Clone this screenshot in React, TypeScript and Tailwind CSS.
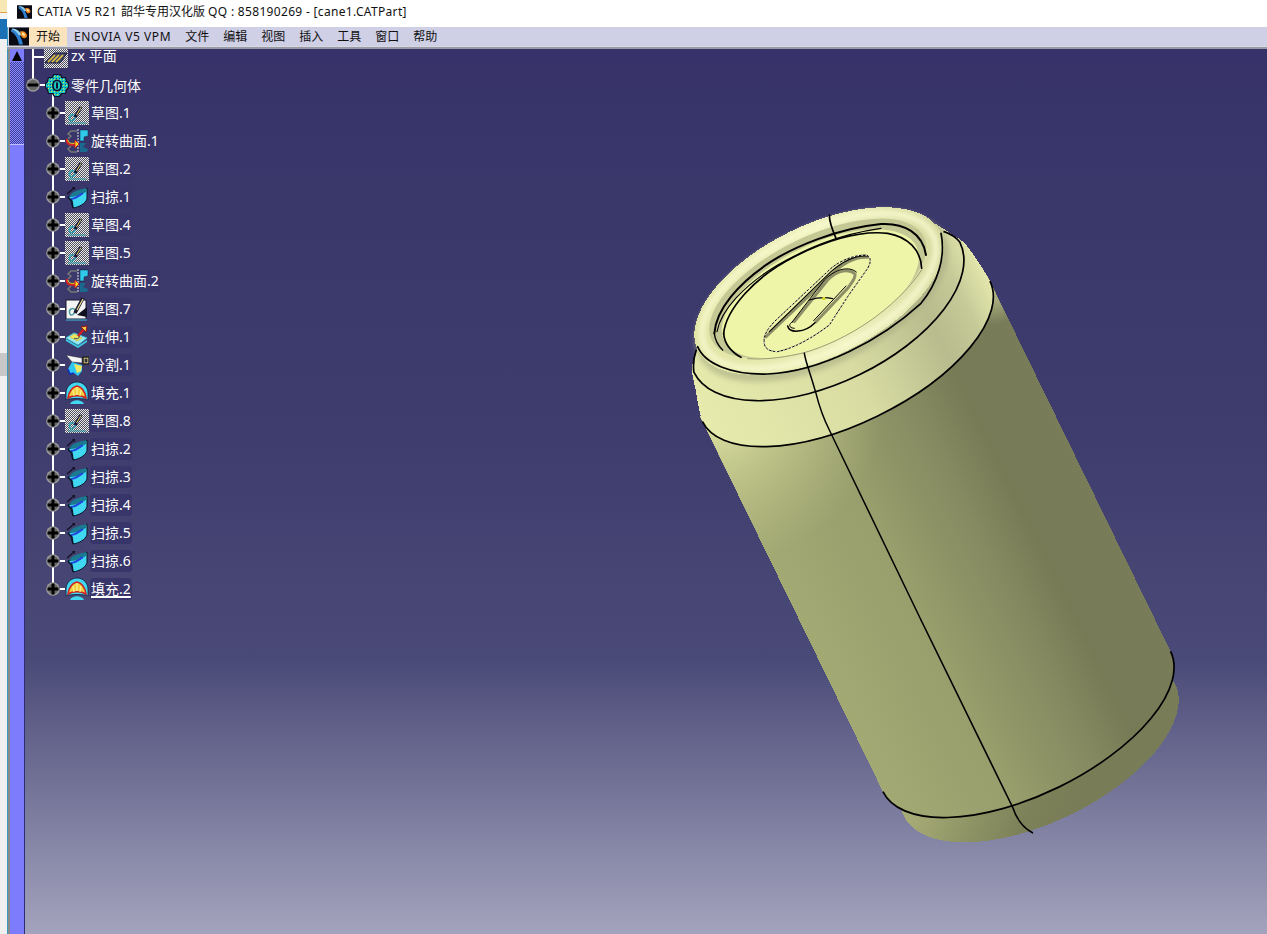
import React from "react";

const MENU = ["ENOVIA V5 VPM", "文件", "编辑", "视图", "插入", "工具", "窗口", "帮助"];

type Kind = "sketch" | "sketchOn" | "revolve" | "sweep" | "extrude" | "split" | "fill";

const ROWS: { label: string; kind: Kind }[] = [
  { label: "草图.1", kind: "sketch" },
  { label: "旋转曲面.1", kind: "revolve" },
  { label: "草图.2", kind: "sketch" },
  { label: "扫掠.1", kind: "sweep" },
  { label: "草图.4", kind: "sketch" },
  { label: "草图.5", kind: "sketch" },
  { label: "旋转曲面.2", kind: "revolve" },
  { label: "草图.7", kind: "sketchOn" },
  { label: "拉伸.1", kind: "extrude" },
  { label: "分割.1", kind: "split" },
  { label: "填充.1", kind: "fill" },
  { label: "草图.8", kind: "sketch" },
  { label: "扫掠.2", kind: "sweep" },
  { label: "扫掠.3", kind: "sweep" },
  { label: "扫掠.4", kind: "sweep" },
  { label: "扫掠.5", kind: "sweep" },
  { label: "扫掠.6", kind: "sweep" },
  { label: "填充.2", kind: "fill" },
];

function CatiaLogo({ className }: { className: string }) {
  return (
    <svg viewBox="0 0 20 18" className={className}>
      <rect width="20" height="18" fill="#0a0a12" />
      <path d="M2 2 C8 3 12 8 14 17 L10 17 C9 11 6 6 2 4 Z" fill="#2f7fd0" />
      <path d="M3 1 C8 1 11 4 13 8 L10 8 C8 5 6 3 3 2 Z" fill="#8fd0f0" />
      <path d="M11 4 C15 3 18 5 18 9 C16 12 13 11 12 8 Z" fill="#f08a20" />
      <path d="M13 5 C15 5 16 6 16 8 C15 9 14 8 13 7 Z" fill="#ffe9a0" />
    </svg>
  );
}

function Node({ minus }: { minus?: boolean }) {
  return (
    <svg viewBox="0 0 14 14" className="relative w-[14px] h-[14px] shrink-0">
      <circle cx="7" cy="7" r="6.8" fill="#9a9a9a" />
      <circle cx="7" cy="7" r="5.2" fill="#666" />
      <rect x="1.5" y="5.5" width="11" height="3" fill="#000" />
      {!minus && <rect x="5.5" y="1.5" width="3" height="11" fill="#000" />}
    </svg>
  );
}

function Dither({ id }: { id: string }) {
  return (
    <pattern id={id} width="2" height="2" patternUnits="userSpaceOnUse">
      <rect width="2" height="2" fill="#50505e" />
      <rect width="1" height="1" fill="#f0f0f0" />
      <rect x="1" y="1" width="1" height="1" fill="#e4e4e4" />
    </pattern>
  );
}

function TreeIcon({ kind, id }: { kind: Kind; id: string }) {
  if (kind === "sketch") {
    return (
      <svg viewBox="0 0 24 24" className="w-6 h-6 shrink-0">
        <defs>
          <Dither id={id} />
        </defs>
        <rect width="24" height="24" fill={`url(#${id})`} shapeRendering="crispEdges" />
        <path d="M5 19 C3 14 8 12 10 15 C11 18 7 21 5 19 Z" fill="none" stroke="#2aa0b0" strokeWidth="1.5" />
        <path d="M10 16 L16 6" stroke="#14143a" strokeWidth="3" />
        <path d="M11.5 14 L16 6.5" stroke="#f0e060" strokeWidth="1" />
        <path d="M3 22 L21 22" stroke="#2aa0b0" strokeWidth="1" />
      </svg>
    );
  }
  if (kind === "sketchOn") {
    return (
      <svg viewBox="0 0 24 24" className="w-6 h-6 shrink-0">
        <rect x="1" y="3" width="20" height="19" fill="#f4f4f4" stroke="#1a1a30" />
        <path d="M5 17 C3 12 8 10 10 13 C11 16 6 20 5 17 Z" fill="none" stroke="#4a9aa0" strokeWidth="1.5" />
        <path d="M10 16 L18 1" stroke="#1a1a30" strokeWidth="3.5" />
        <path d="M12 13 L18 2" stroke="#f0e090" strokeWidth="1.2" />
        <path d="M12 18 L22 10 L22 20 Z" fill="#101020" />
        <path d="M1 23 L22 23" stroke="#40c0e0" strokeWidth="1" />
      </svg>
    );
  }
  if (kind === "revolve") {
    return (
      <svg viewBox="0 0 24 24" className="w-6 h-6 shrink-0">
        <path d="M12 2 L6 2 L3 5 L6 7 L3 10 M6 17 L3 20 L6 23 L12 23" fill="none" stroke="#777" strokeWidth="1.5" />
        <path d="M15 1 L23 1 L23 7 L19 8 L19 12 L15 12 Z" fill="#30c8e8" stroke="#0a2040" strokeWidth="0.5" />
        <path d="M15 14 L21 14 L18 18 L23 20 L22 23 L15 23 Z" fill="#1a6a90" />
        <path d="M13 0 L13 24" stroke="#e8e8e8" strokeWidth="1" strokeDasharray="2 1" />
        <path d="M2 10 C1 15 5 17 11 15" fill="none" stroke="#e02020" strokeWidth="2" />
        <path d="M3 11 C3 14 6 15 11 14" fill="none" stroke="#f0e020" strokeWidth="1" />
        <path d="M10 11 L14 15 L10 19 Z" fill="#f0e020" stroke="#d02020" strokeWidth="1" />
      </svg>
    );
  }
  if (kind === "sweep") {
    return (
      <svg viewBox="0 0 24 24" className="w-6 h-6 shrink-0">
        <path d="M2 9 L9 3" stroke="#101020" strokeWidth="1.2" />
        <path d="M7 2 L10 2 L10 5 Z" fill="#101020" />
        <path d="M3 12 C8 11 14 7 22 3 L22 14 C20 19 14 22 8 23 L6 16 Z" fill="#40d8f0" stroke="#08142a" strokeWidth="1" />
        <path d="M7 8 C10 6 16 4 21 3 L21 7 C15 10 10 12 4 12 Z" fill="#1a7a90" />
        <path d="M6 14 C10 14 14 11 18 8" fill="none" stroke="#2040e0" strokeWidth="2" />
        <path d="M3 12 L7 16 L8 23" fill="none" stroke="#08142a" strokeWidth="1.5" />
      </svg>
    );
  }
  if (kind === "extrude") {
    return (
      <svg viewBox="0 0 24 24" className="w-6 h-6 shrink-0">
        <path d="M1 13 L9 8 L22 13 L13 20 Z" fill="#9ce8f0" stroke="#40c0d8" strokeWidth="1" />
        <path d="M1 16 L13 23 L22 17 L22 15 L13 21 L1 14 Z" fill="#40d0e8" />
        <path d="M5 12 L9 9 L17 13 L12 16 Z" fill="#f0e860" stroke="#d0c030" strokeWidth="0.7" />
        <path d="M9 13 C12 15 15 13 14 11" fill="none" stroke="#1a3a60" strokeWidth="1" />
        <path d="M13 11 L19 4" stroke="#d02020" strokeWidth="2.5" />
        <path d="M16 2 L22 1 L21 7 Z" fill="#f0d040" stroke="#a01010" strokeWidth="1" />
      </svg>
    );
  }
  if (kind === "split") {
    return (
      <svg viewBox="0 0 24 24" className="w-6 h-6 shrink-0">
        <path d="M1 2 L17 5 L17 10 L7 9 Z" fill="#f4f4f4" stroke="#1a1a30" strokeWidth="0.5" />
        <path d="M18 4 L24 4 L24 11 L18 11 Z" fill="#f0e080" stroke="#202020" strokeWidth="1.5" />
        <rect x="19.5" y="5.5" width="3" height="4" fill="#303040" />
        <path d="M7 9 L17 12 L17 18 L13 23 L9 20 L5 21 L3 16 Z" fill="#30c8f0" />
        <path d="M9 11 L17 13 L16 18 L12 20 Z" fill="#f0e860" />
        <path d="M3 16 L5 21 L9 20" fill="none" stroke="#1030c0" strokeWidth="1.5" />
      </svg>
    );
  }
  return (
    <svg viewBox="0 0 24 24" className="w-6 h-6 shrink-0">
      <path d="M12 1 C18 1 23 6 23 12 L23 19 C20 17 4 17 1 19 L1 12 C1 6 6 1 12 1 Z" fill="#40d8f0" stroke="#0c2040" strokeWidth="0.8" />
      <path d="M3 17 C4 10 8 6 12 5 C16 6 20 10 21 17 C16 14 8 14 3 17 Z" fill="#f4d040" stroke="#d02020" strokeWidth="1.6" />
      <path d="M12 6 L12 14 M8 9 L9 15 M16 9 L15 15" stroke="#f8f090" strokeWidth="1.3" />
      <path d="M5 23 C7 18 17 18 19 23 Z" fill="#40d8f0" />
    </svg>
  );
}

function PlaneIcon() {
  return (
    <svg viewBox="0 0 24 24" className="w-6 h-6 shrink-0">
      <defs>
        <Dither id="plane-d" />
      </defs>
      <rect width="24" height="22" y="1" fill="url(#plane-d)" shapeRendering="crispEdges" />
      <path d="M1 18 L10 8 L23 8 L16 18 Z" fill="#4a4a64" stroke="#14143a" strokeWidth="1" />
      <path d="M4 17 L11 10 M8 17 L15 10 M12 17 L19 10" stroke="#e8c840" strokeWidth="1.5" />
    </svg>
  );
}

function GearIcon() {
  return (
    <svg viewBox="0 0 24 24" className="w-6 h-6 shrink-0">
      <defs>
        <pattern id="gear-d" width="3" height="3" patternUnits="userSpaceOnUse">
          <rect width="3" height="3" fill="#18c8c0" />
          <rect width="1" height="1" fill="#e8e040" />
          <rect x="2" y="2" width="1" height="1" fill="#1050a0" />
        </pattern>
      </defs>
      <path d="M8 1 L16 1 L17 4 L21 4 L22 8 L24 10 L24 15 L22 17 L21 21 L17 21 L15 24 L9 24 L7 21 L3 21 L2 17 L0 15 L0 10 L2 8 L3 4 L7 4 Z" fill="#101030" />
      <path d="M9 2 L15 2 L16 5 L20 5 L21 9 L23 11 L23 14 L21 16 L20 20 L16 20 L14 23 L10 23 L8 20 L4 20 L3 16 L1 14 L1 11 L3 9 L4 5 L8 5 Z" fill="url(#gear-d)" />
      <ellipse cx="12" cy="12.5" rx="5" ry="6" fill="#101030" />
      <ellipse cx="12" cy="12.5" rx="3.2" ry="4.2" fill="#18c8c0" />
      <rect x="11" y="9.5" width="2" height="6" fill="#101030" />
    </svg>
  );
}

function Label({ text, active }: { text: string; active?: boolean }) {
  return (
    <span
      className={`h-[22px] px-px ml-px rounded-sm bg-[#38356a] text-white text-[14px] leading-[22px] whitespace-nowrap ${
        active ? "underline decoration-2 underline-offset-2" : ""
      }`}
    >
      {text}
    </span>
  );
}

function CanModel() {
  return (
    <svg viewBox="0 0 1267 934" className="absolute left-[-24px] top-[-49px] w-[1267px] h-[934px] pointer-events-none">
      <defs>
        <linearGradient id="body" gradientUnits="userSpaceOnUse" x1="-162" y1="0" x2="158" y2="0">
          <stop offset="0" stopColor="#a3a973" />
          <stop offset="0.35" stopColor="#989e6c" />
          <stop offset="0.62" stopColor="#858a61" />
          <stop offset="0.78" stopColor="#767b56" />
          <stop offset="1" stopColor="#787c58" />
        </linearGradient>
        <linearGradient id="cap" gradientUnits="userSpaceOnUse" x1="-100" y1="470" x2="0" y2="585">
          <stop offset="0" stopColor="#a6ab76" />
          <stop offset="0.7" stopColor="#7c8159" />
          <stop offset="1" stopColor="#787d57" />
        </linearGradient>
        <radialGradient id="glow" gradientUnits="userSpaceOnUse" cx="-140" cy="50" r="170">
          <stop offset="0" stopColor="#eef2b0" stopOpacity="1" />
          <stop offset="0.4" stopColor="#dfe3a4" stopOpacity="0.55" />
          <stop offset="1" stopColor="#c8cc90" stopOpacity="0" />
        </radialGradient>
        <radialGradient id="glowR" gradientUnits="userSpaceOnUse" cx="160" cy="60" r="50">
          <stop offset="0" stopColor="#e6eaac" stopOpacity="0.9" />
          <stop offset="1" stopColor="#e6eaac" stopOpacity="0" />
        </radialGradient>
        <linearGradient id="shoulder" gradientUnits="userSpaceOnUse" x1="-162" y1="0" x2="158" y2="0">
          <stop offset="0" stopColor="#e6ebad" />
          <stop offset="0.5" stopColor="#d8dca2" />
          <stop offset="0.78" stopColor="#b8bc8e" />
          <stop offset="0.9" stopColor="#c6ca98" />
          <stop offset="1" stopColor="#e4e8ac" />
        </linearGradient>
        <linearGradient id="rim" gradientUnits="userSpaceOnUse" x1="-135" y1="-30" x2="135" y2="30">
          <stop offset="0" stopColor="#dfe3a2" />
          <stop offset="0.55" stopColor="#eef1bc" />
          <stop offset="1" stopColor="#d4d89e" />
        </linearGradient>
        <filter id="soft" x="-10%" y="-20%" width="120%" height="140%">
          <feGaussianBlur stdDeviation="2.5" />
        </filter>
        <clipPath id="bodyClip">
          <path d="M-162,60 L-162,478 A160,73 0 0 0 158,478 L158,60 Z" />
        </clipPath>
      </defs>

      <g transform="translate(818 291) rotate(-26)">
        <ellipse cx="-3" cy="509" rx="151" ry="72" fill="url(#cap)" shapeRendering="crispEdges" />
        <path d="M-162,60 L-162,478 A160,73 0 0 0 158,478 L158,60 Z" fill="url(#body)" shapeRendering="crispEdges" />
        <g clipPath="url(#bodyClip)">
          <rect x="-170" y="40" width="340" height="240" fill="url(#glow)" />
          <rect x="90" y="40" width="80" height="120" fill="url(#glowR)" />
        </g>
        <path
          d="M-134,-2 C-142,6 -150,12 -151,22 C-155,40 -161,55 -162,66 A160,72 0 0 0 158,66 C157,48 155,35 152,21 C148,12 142,4 134,-10 Z"
          fill="url(#shoulder)"
          shapeRendering="crispEdges"
        />
        <ellipse cx="0" cy="6" rx="137" ry="68" fill="#a8ac82" opacity="0.6" filter="url(#soft)" />
        <ellipse cx="0" cy="0" rx="135" ry="66" fill="url(#rim)" shapeRendering="crispEdges" />
        <ellipse cx="0" cy="0" rx="127" ry="60" fill="none" stroke="#f8fad0" strokeWidth="6" opacity="0.9" filter="url(#soft)" />
        <ellipse cx="0" cy="-3" rx="118" ry="52" fill="#c4c894" />
        <ellipse cx="0" cy="3" rx="107" ry="49" fill="#eef5a9" />
        <g fill="none" stroke="#000" strokeWidth="1.7">
          <path d="M-136,-1 C-142,5 -146,12 -148,18 A148,75 0 0 0 148,18 C147,12 143,6 138,1" />
          <path d="M-162,66 A160,72 0 0 0 158,66" />
          <path d="M-162,478 A160,73 0 0 0 158,478" />
        </g>
      </g>

      {/* details traced at 3x, from the crop at 680,200 */}
      <g transform="translate(680 200) scale(0.33333)" fill="none" stroke="#000" strokeLinecap="round">
        <path d="M50,440 C70,490 150,525 260,522 C420,515 600,420 720,310 C770,250 795,170 780,100" strokeWidth="5" />
        <path d="M100,400 C105,330 170,250 270,185 C340,140 470,85 600,72 C670,68 725,100 735,165" strokeWidth="6" />
        <path d="M108,395 C120,330 190,255 290,195 C370,150 460,105 600,85" strokeWidth="3.5" />
        <path d="M128,400 C135,330 220,230 340,170 C430,125 530,90 620,100 C680,110 720,150 722,205" strokeWidth="5" />
        <path d="M128,400 C130,430 150,455 180,472" strokeWidth="5" />
        <path d="M100,400 C102,420 110,435 125,450" strokeWidth="4" />
        <path d="M370,458 C500,420 640,330 722,210" stroke="#8a8a66" strokeWidth="2.5" />
        <path d="M200,476 C260,480 320,470 370,458" stroke="#8a8a66" strokeWidth="2.5" />

        <path d="M255,410 L450,225 C490,185 530,170 560,172" stroke="#8d8f66" strokeWidth="9" />
        <path d="M265,395 L450,215 C490,180 530,165 560,168" strokeWidth="3.5" />
        <path d="M340,365 L440,240 C470,210 505,205 522,222 C525,235 510,250 500,265 L405,365" stroke="#8d8f66" strokeWidth="9" />
        <path d="M332,368 L430,240 C465,205 505,198 526,216" strokeWidth="3" />
        <path d="M398,362 L495,258" strokeWidth="3" />
        <path d="M320,378 C325,400 370,400 402,368" strokeWidth="4.5" />
        <path d="M335,365 C322,372 322,384 340,385" strokeWidth="3" />
        <path d="M385,300 C405,294 430,290 455,296" strokeWidth="3.5" />
        <rect x="424" y="291" width="9" height="9" fill="#d8d820" stroke="none" />

        <path
          d="M250,430 C245,405 262,385 280,365 L450,205 C480,180 520,165 555,165 C570,170 572,185 560,205 L500,290 L445,375 C400,410 340,445 290,455 C265,455 250,445 250,430 Z"
          strokeWidth="3"
        />
        <path
          d="M250,430 C245,405 262,385 280,365 L450,205 C480,180 520,165 555,165 C570,170 572,185 560,205 L500,290 L445,375 C400,410 340,445 290,455 C265,455 250,445 250,430 Z"
          stroke="#fff"
          strokeWidth="3"
          strokeDasharray="5 7"
          strokeLinecap="butt"
        />

        <path d="M445,45 C445,60 452,85 465,115" strokeWidth="5" />
        <path d="M370,460 C375,490 385,510 405,580 C415,620 430,660 445,690 L720,1260" strokeWidth="4.5" />
      </g>
      <path d="M920,620 L1012,808 C1016,820 1022,828 1032,833" fill="none" stroke="#000" strokeWidth="1.6" />
    </svg>
  );
}

export default function App() {
  return (
    <div className="flex w-[1267px] h-[934px] overflow-hidden bg-white font-['Noto_Sans','Noto_Sans_CJK_SC',sans-serif]">
      {/* other windows peeking out at the left */}
      <div className="w-[7px] shrink-0 flex flex-col bg-[#f0f0f0]">
        <div className="h-[13px] bg-[#f6e7b4] border-b border-[#e0a040]" />
        <div className="h-[6px] bg-[#f4f4f4]" />
        <div className="h-[20px] bg-[#1c70b5]" />
        <div className="h-[314px]" />
        <div className="h-[23px] bg-[#c8c8c8]" />
      </div>

      <div className="flex-1 flex flex-col min-w-0">
        <div className="h-[27px] shrink-0 flex items-center bg-white pl-[10px]">
          <CatiaLogo className="w-[15px] h-[14px] mb-[3px]" />
          <span className="ml-[5px] mb-[3px] text-[12px] text-[#111] whitespace-pre">
            <span className="tracking-[0.5px]">CATIA V5 R21 </span>
            <span>韶华专用汉化版 </span>
            <span className="tracking-[0.32px]">QQ : 858190269 - [cane1.CATPart]</span>
          </span>
        </div>

        <div className="h-[19px] shrink-0 flex items-stretch bg-[#cfcfe6] border-l border-[#3a9ac0] text-[12px] text-[#111]">
          <div className="w-[1px]" />
          <CatiaLogo className="w-[20px] h-[19px]" />
          <div className="w-[38px] flex items-center justify-center bg-[#fbe3bd]">开始</div>
          {MENU.map((m, i) => (
            <div key={m} className={`px-[7px] flex items-center whitespace-nowrap ${i === 0 ? "tracking-[0.58px]" : ""}`}>
              {m}
            </div>
          ))}
        </div>
        <div className="h-[3px] shrink-0 bg-[#9a9aa6] border-t border-[#d8d8e0]" />

        <div className="flex-1 flex min-h-0 border-l border-[#3a9ac0]">
          <div className="w-[2px] shrink-0 bg-[#8a8a8a]" />
          <div className="w-[14px] shrink-0 flex flex-col bg-[#7c7cfc]">
            <div className="h-[13px] flex items-center justify-center bg-[#7c7cfc]">
              <div className="w-0 h-0 border-l-[5px] border-r-[5px] border-b-[10px] border-l-transparent border-r-transparent border-b-black" />
            </div>
            <div className="h-[82px] bg-[conic-gradient(#3c3c9c_25%,#8c8cfc_0_50%,#3c3c9c_0_75%,#8c8cfc_0)] bg-[length:2px_2px]" />
            <div className="h-px bg-[#c0c0f8]" />
          </div>

          <div className="relative flex-1 overflow-hidden border-l border-[#2c2c78] bg-[linear-gradient(to_bottom,#37336a_0%,#3f3d6d_45%,#4a4a78_69%,#a3a3bd_100%)]">
            <CanModel />

            <div className="relative -mt-[6px] w-fit">
              <div className="absolute left-[7px] top-0 w-[2px] h-[36px] bg-white" />
              <div className="absolute left-[27px] top-[44px] w-[2px] h-[496px] bg-white" />

              <div className="relative h-7 flex items-center pl-[8px]">
                <div className="w-[11px] h-[2px] bg-white" />
                <PlaneIcon />
                <span className="ml-[3px] mb-[2px] text-white text-[14px] leading-[14px]">zx 平面</span>
              </div>
              <div className="relative h-7 flex items-center pl-[1px]">
                <Node minus />
                <div className="w-[5px] h-[2px] bg-white" />
                <GearIcon />
                <span className="ml-[2px] text-white text-[14px]">零件几何体</span>
              </div>

              {ROWS.map((r, i) => (
                <div key={i} className="relative h-7 flex items-center pl-[21px]">
                  <Node />
                  <div className="w-[5px] h-[2px] bg-white" />
                  <TreeIcon kind={r.kind} id={`d${i}`} />
                  <Label text={r.label} active={i === ROWS.length - 1} />
                </div>
              ))}
            </div>
          </div>
        </div>
      </div>
    </div>
  );
}
